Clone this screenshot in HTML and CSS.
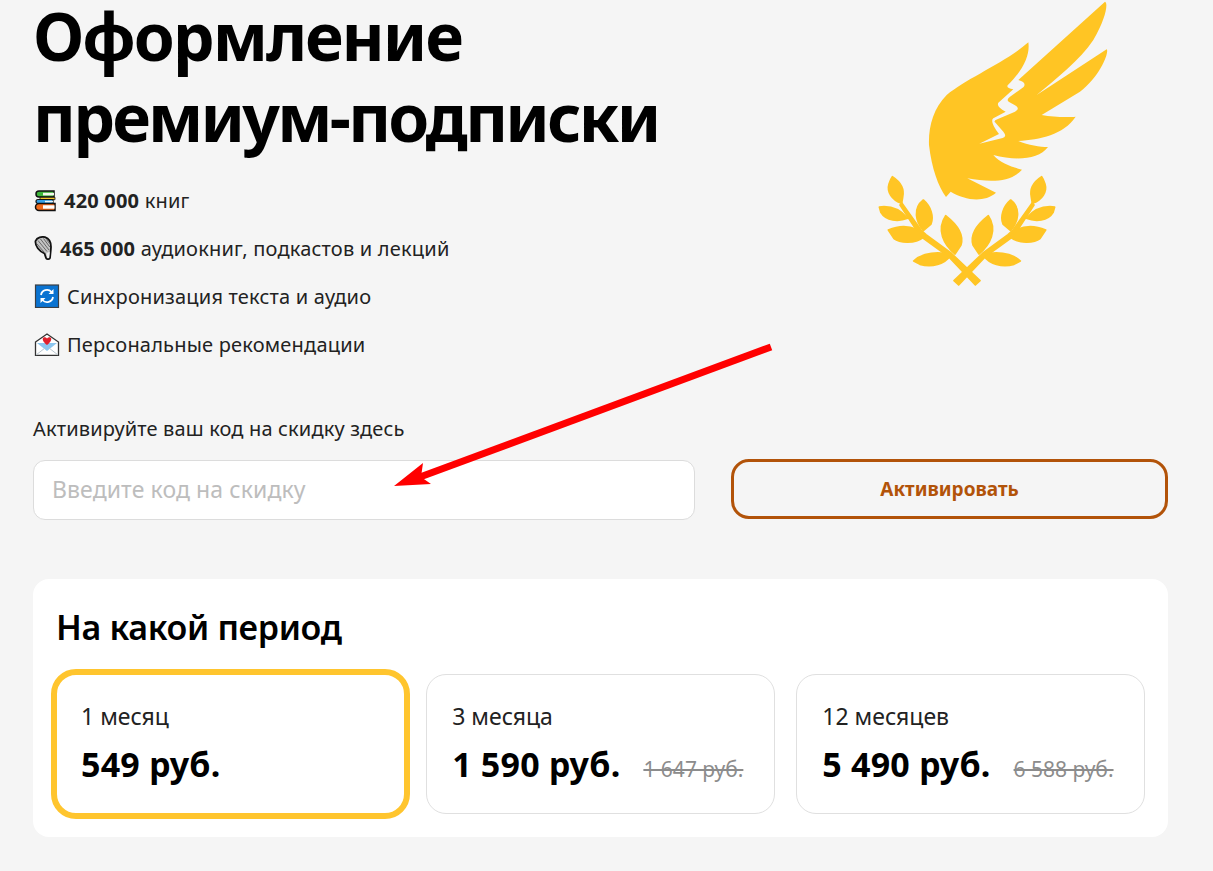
FILE: index.html
```html
<!DOCTYPE html>
<html lang="ru">
<head>
<meta charset="utf-8">
<title>Оформление премиум-подписки</title>
<link rel="stylesheet" href="styles.css">
</head>
<body>
<main class="page">
  <section class="hero">
    <div class="hero-text">
      <h1 class="title"><span class="title-line">Оформление</span><span class="title-line title-tight">премиум-подписки</span></h1>
      <ul class="perks">
        <li class="perk">
          <svg class="icon icon-books" viewBox="0 0 24 24">
            <path d="M6 3h15v6H6a3 3 0 0 1 0-6z" fill="#3db53a" stroke="#111" stroke-width="1.500"/>
            <rect x="10" y="4.800" width="11" height="2.600" fill="#f4f8ec"/>
            <path d="M7 9.300h15v2.400H7z" fill="#f7c52b" stroke="#111" stroke-width=".8"/>
            <path d="M5 11.500h15v4H5a2 2 0 0 1 0-4z" fill="#35a0e8" stroke="#111" stroke-width="1.200"/>
            <rect x="12" y="12.800" width="8" height="1.600" fill="#e9f4fb"/>
            <path d="M6 15.500h16v7H6a3.500 3.500 0 0 1 0-7z" fill="#f26a1b" stroke="#111" stroke-width="1.500"/>
            <rect x="10" y="17.300" width="11.500" height="3.400" fill="#fff"/>
          </svg>
          <span><b class="strong">420 000</b> книг</span>
        </li>
        <li class="perk">
          <svg class="icon icon-mic" viewBox="0 0 20 24">
            <path d="M2.500 5C4 1.500 9 .3 12 1.200C16 2.500 18 6 18 11L17.800 14L17 22C16.500 23.500 13.500 23.500 13 22L11.500 17.500C6 15 2 10 2.500 5z" fill="#c4c4c4" stroke="#111" stroke-width="1.800"/>
            <path d="M4 8L11 16M5 4.500L14 15.500M7.500 3L16 14M10.500 2.500L16.800 11M13.500 3.500L17 8" stroke="#666" stroke-width="1" fill="none"/>
            <path d="M13.500 17.500L16.800 15.500L16.200 21.500C15.800 22.300 14.500 22.300 14.200 21.500z" fill="#f0f0f0"/>
          </svg>
          <span><b class="strong">465 000</b> аудиокниг, подкастов и лекций</span>
        </li>
        <li class="perk">
          <svg class="icon icon-wide" viewBox="0 0 27 24"><rect x="2.500" y="1" width="23" height="22.500" fill="#0a73d1" stroke="#3a3f45" stroke-width="1.200"/><path d="M8 11a6 6 0 0 1 10.500-3M20 13a6 6 0 0 1-10.500 3" fill="none" stroke="#fff" stroke-width="1.800"/><path d="M20.500 5v5h-5zM7.500 19v-5h5z" fill="#fff"/></svg>
          <span>Синхронизация текста и аудио</span>
        </li>
        <li class="perk">
          <svg class="icon icon-wide" viewBox="0 0 27 24"><path d="M2.500 10L14 2l11.500 8v13.500h-23z" fill="#fff" stroke="#333" stroke-width="1.300"/><path d="M4 11h20l-10 8z" fill="#8cc6ef"/><path d="M14 13C10 10 9.500 7.500 9.800 6.500c.6-1.700 3-1.700 4.200 0 1.200-1.700 3.600-1.700 4.200 0 .3 1-.2 3.500-4.200 6.500z" fill="#e0202c"/><path d="M3 23l9-7M25 23l-9-7" stroke="#b9c6cf" stroke-width="1"/></svg>
          <span>Персональные рекомендации</span>
        </li>
      </ul>
    </div>
    <svg class="wing" viewBox="0 0 780 900" aria-hidden="true">
      <g fill="#ffc524">
        <path d="M258 591C235 560 215 505 207 435C205 380 220 325 260 285C320 235 440 185 505 127C510 160 495 205 443 256Q438 264 460 268L415 308Q408 320 437 335L400 355Q388 364 417 402L358 431L428 414Q442 410 430 395L405 367Q400 362 412 358L465 335Q482 325 465 316L446 305Q438 300 450 290L490 262Q502 248 475 240L735 5C745 8 738 55 700 120C660 180 590 235 530 285L740 148C748 152 725 225 660 275L545 345C580 352 625 352 647 350C610 405 540 418 475 423C505 436 540 441 564 441C535 480 465 482 400 465C420 490 460 502 486 509C450 550 385 545 322 535L408 578C370 610 315 600 272 575z"/>
        <g id="laurel" stroke="#ffc524" stroke-width="5" stroke-linejoin="round">
          <path d="M125 608L183 690L198 704L272 758L360 842L346 855L266 770L190 715L172 695L120 615z"/>
          <path d="M97 530C125 548 133 570 128 592L125 610C95 600 80 575 87 552C90 542 93 535 97 530z"/>
          <path d="M58 621C90 617 120 627 143 655C115 666 78 663 63 638z"/>
          <path d="M190 600C213 620 222 650 213 672L190 692C167 665 158 625 190 600z"/>
          <path d="M85 690C115 677 145 677 170 688L190 712C165 733 117 728 102 716z"/>
          <path d="M257 647C293 675 312 705 303 735L285 762C252 735 228 690 257 647z"/>
          <path d="M161 783C187 757 240 754 272 765C255 793 215 803 180 793z"/>
        </g>
        <use href="#laurel" transform="translate(642 0) scale(-1 1)"/>
      </g>
    </svg>
  </section>

  <section class="promo">
    <label class="promo-label" for="code">Активируйте ваш код на скидку здесь</label>
    <div class="promo-row">
      <input class="promo-input" id="code" placeholder="Введите код на скидку">
      <button class="promo-button">Активировать</button>
    </div>
  </section>

  <section class="period">
    <h2 class="period-title">На какой период</h2>
    <div class="plans">
      <div class="plan plan-active">
        <div class="plan-name">1 месяц</div>
        <div class="plan-price"><span class="price">549 руб.</span></div>
      </div>
      <div class="plan">
        <div class="plan-name">3 месяца</div>
        <div class="plan-price"><span class="price">1 590 руб.</span><s class="old">1 647 руб.</s></div>
      </div>
      <div class="plan">
        <div class="plan-name">12 месяцев</div>
        <div class="plan-price"><span class="price">5 490 руб.</span><s class="old">6 588 руб.</s></div>
      </div>
    </div>
  </section>
</main>
<svg class="arrow" viewBox="0 0 1213 871" aria-hidden="true">
  <path d="M771 347L420 477" stroke="#ff0000" stroke-width="7" fill="none"/>
  <path d="M394 486L423 463L421 477L431 484z" fill="#ff0000"/>
</svg>
</body>
</html>
```
FILE: styles.css
```css
* { box-sizing: border-box; }
html, body { margin: 0; padding: 0; }
body {
  background: #f5f5f5;
  color: #222;
  font-family: "Noto Sans", "Open Sans", sans-serif;
  height: 871px;
  overflow: hidden;
  position: relative;
}
.page { width: 1135px; margin-left: 33px; }
.hero { display: flex; justify-content: space-between; height: 370px; }
.title {
  margin: 0;
  font-size: 66px;
  font-weight: 700;
  letter-spacing: -2px;
  color: #000;
}
.title-line { display: block; line-height: 71px; }
.title-tight { letter-spacing: -2.75px; margin-top: 10px; }
.perks { list-style: none; margin: 24px 0 0; padding: 0; }
.perk {
  display: flex;
  align-items: center;
  gap: 7px;
  height: 48px;
  font-size: 20px;
  letter-spacing: 0.2px;
}
.strong { font-weight: 700; }
.icon { display: block; height: 24px; flex: none; }
.icon-books { width: 24px; }
.icon-mic { width: 20px; }
.icon-wide { width: 27px; }
.wing { width: 260px; height: 300px; margin-right: 48px; flex: none; }
.promo { margin-top: 47px; }
.promo-label { display: block; font-size: 20px; line-height: 24px; letter-spacing: 0.15px; }
.promo-row { display: flex; gap: 36px; margin-top: 18px; }
.promo-input {
  width: 662px;
  height: 60px;
  border: 1px solid #dcdcdc;
  border-radius: 12px;
  background: #fff;
  padding: 0 18px 3px;
  font: 23px "Noto Sans", sans-serif;
  letter-spacing: 0.1px;
  margin-top: 1px;
}
.promo-input::placeholder { color: #bdbdbd; opacity: 1; }
.promo-button {
  flex: 1;
  height: 60px;
  border: 3px solid #b25309;
  border-radius: 18px;
  background: transparent;
  color: #b25309;
  font: 700 19px "Noto Sans", sans-serif;
}
.period {
  margin-top: 59px;
  height: 258px;
  background: #fff;
  border-radius: 16px;
  padding: 24px 23px 0;
}
.period-title {
  margin: 0;
  font-size: 34px;
  line-height: 48px;
  font-weight: 600;
  letter-spacing: -0.33px;
  color: #000;
}
.plans { display: grid; grid-template-columns: repeat(3, 1fr); gap: 21.5px; margin-top: 23px; }
.plan {
  height: 140px;
  border: 1px solid #e0e0e0;
  border-radius: 20px;
  padding: 25px 25px 0;
}
.plan-active {
  border: 6px solid #ffc52e;
  border-radius: 25px;
  margin: -5px;
  height: 150px;
  padding: 25px 24px 0;
}
.plan-name { font-size: 23px; line-height: 32px; }
.plan-price { display: flex; align-items: baseline; gap: 23px; margin-top: 8px; }
.price { font-size: 34px; line-height: 48px; font-weight: 700; letter-spacing: 0.2px; color: #000; }
.old { font-size: 21px; color: #8c8c8c; }
.arrow { position: absolute; left: 0; top: 0; width: 1213px; height: 871px; pointer-events: none; }
```
